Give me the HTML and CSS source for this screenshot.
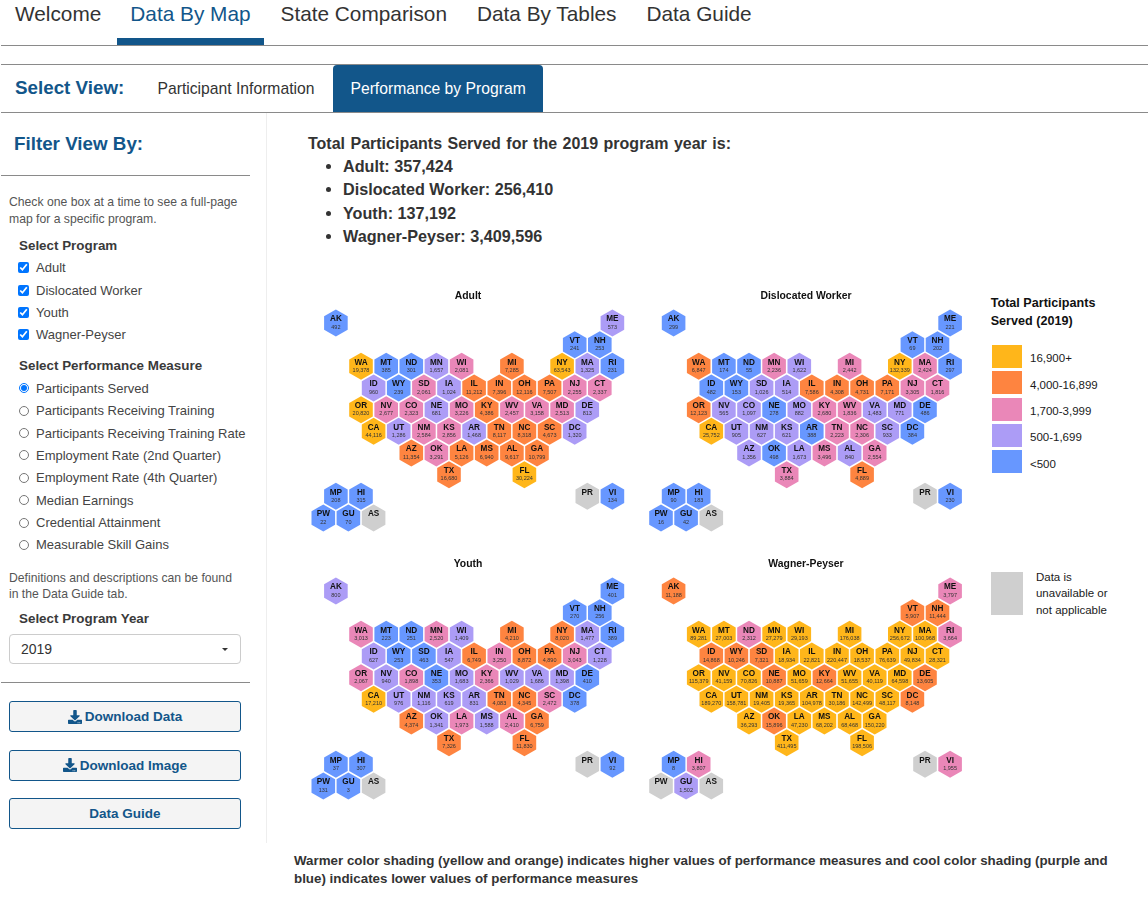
FILE: index.html
```html
<!DOCTYPE html>
<html lang="en">
<head>
<meta charset="utf-8">
<title>Data By Map</title>
<link rel="stylesheet" href="styles.css">
</head>
<body>
<nav class="topnav">
<a class="toptab">Welcome</a>
<a class="toptab active">Data By Map</a>
<a class="toptab">State Comparison</a>
<a class="toptab">Data By Tables</a>
<a class="toptab">Data Guide</a>
</nav>
<div class="subnav">
<span class="viewlabel">Select View:</span>
<a class="subtab">Participant Information</a>
<a class="subtab active">Performance by Program</a>
</div>
<div class="layout">
<aside class="sidebar">
<h2 class="filter-title">Filter View By:</h2>
<div class="rule"></div>
<p class="help first">Check one box at a time to see a full-page map for a specific program.</p>
<div class="group-label top">Select Program</div>
<label class="opt"><input type="checkbox" checked>Adult</label>
<label class="opt"><input type="checkbox" checked>Dislocated Worker</label>
<label class="opt"><input type="checkbox" checked>Youth</label>
<label class="opt"><input type="checkbox" checked>Wagner-Peyser</label>
<div class="group-label">Select Performance Measure</div>
<label class="opt"><input type="radio" name="m" checked>Participants Served</label>
<label class="opt"><input type="radio" name="m">Participants Receiving Training</label>
<label class="opt"><input type="radio" name="m">Participants Receiving Training Rate</label>
<label class="opt"><input type="radio" name="m">Employment Rate (2nd Quarter)</label>
<label class="opt"><input type="radio" name="m">Employment Rate (4th Quarter)</label>
<label class="opt"><input type="radio" name="m">Median Earnings</label>
<label class="opt"><input type="radio" name="m">Credential Attainment</label>
<label class="opt"><input type="radio" name="m">Measurable Skill Gains</label>
<p class="help defs">Definitions and descriptions can be found in the Data Guide tab.</p>
<div class="group-label year">Select Program Year</div>
<div class="selectbox"><span>2019</span><i class="caret"></i></div>
<div class="rule low"></div>
<a class="btn"><svg class="dl" viewBox="0 0 512 512"><path d="M216 0h80c13.3 0 24 10.7 24 24v168h87.7c17.8 0 26.7 21.5 14.1 34.1L269.7 378.3c-7.5 7.5-19.8 7.5-27.3 0L90.1 226.1c-12.6-12.6-3.7-34.1 14.1-34.1H192V24c0-13.3 10.7-24 24-24zm296 376v112c0 13.3-10.7 24-24 24H24c-13.3 0-24-10.7-24-24V376c0-13.3 10.7-24 24-24h146.7l49 49c20.1 20.1 52.5 20.1 72.6 0l49-49H488c13.3 0 24 10.7 24 24zm-124 88c0-11-9-20-20-20s-20 9-20 20 9 20 20 20 20-9 20-20zm64 0c0-11-9-20-20-20s-20 9-20 20 9 20 20 20 20-9 20-20z"/></svg>Download Data</a>
<a class="btn"><svg class="dl" viewBox="0 0 512 512"><path d="M216 0h80c13.3 0 24 10.7 24 24v168h87.7c17.8 0 26.7 21.5 14.1 34.1L269.7 378.3c-7.5 7.5-19.8 7.5-27.3 0L90.1 226.1c-12.6-12.6-3.7-34.1 14.1-34.1H192V24c0-13.3 10.7-24 24-24zm296 376v112c0 13.3-10.7 24-24 24H24c-13.3 0-24-10.7-24-24V376c0-13.3 10.7-24 24-24h146.7l49 49c20.1 20.1 52.5 20.1 72.6 0l49-49H488c13.3 0 24 10.7 24 24zm-124 88c0-11-9-20-20-20s-20 9-20 20 9 20 20 20 20-9 20-20zm64 0c0-11-9-20-20-20s-20 9-20 20 9 20 20 20 20-9 20-20z"/></svg>Download Image</a>
<a class="btn">Data Guide</a>
</aside>
<main class="main">
<h3 class="totals-title">Total Participants Served for the 2019 program year is:</h3>
<ul class="totals">
<li>Adult: 357,424</li>
<li>Dislocated Worker: 256,410</li>
<li>Youth: 137,192</li>
<li>Wagner-Peyser: 3,409,596</li>
</ul>
<figure class="figure">
<div class="maps">
<svg class="map" viewBox="0 0 338 268"><defs><path id="h" d="M0-13.5 11.8-6.8V6.8L0 13.5-11.8 6.8V-6.8Z"/></defs>
<text class="title" x="168" y="15">Adult</text>
<g transform="translate(23.3 39)">
<g class="b" transform="translate(12.6)"><use href="#h"/><text>AK</text><text>492</text></g>
<g class="u" transform="translate(289.1)"><use href="#h"/><text>ME</text><text>573</text></g>
</g>
<g transform="translate(23.3 60.7)">
<g class="b" transform="translate(251.4)"><use href="#h"/><text>VT</text><text>241</text></g>
<g class="b" transform="translate(276.5)"><use href="#h"/><text>NH</text><text>253</text></g>
</g>
<g transform="translate(23.3 82.3)">
<g class="y" transform="translate(37.7)"><use href="#h"/><text>WA</text><text>19,378</text></g>
<g class="b" transform="translate(62.9)"><use href="#h"/><text>MT</text><text>385</text></g>
<g class="b" transform="translate(88)"><use href="#h"/><text>ND</text><text>301</text></g>
<g class="u" transform="translate(113.1)"><use href="#h"/><text>MN</text><text>1,657</text></g>
<g class="p" transform="translate(138.3)"><use href="#h"/><text>WI</text><text>2,081</text></g>
<g class="o" transform="translate(188.6)"><use href="#h"/><text>MI</text><text>7,285</text></g>
<g class="y" transform="translate(238.8)"><use href="#h"/><text>NY</text><text>63,543</text></g>
<g class="u" transform="translate(264)"><use href="#h"/><text>MA</text><text>1,325</text></g>
<g class="b" transform="translate(289.1)"><use href="#h"/><text>RI</text><text>231</text></g>
</g>
<g transform="translate(23.3 104)">
<g class="u" transform="translate(50.3)"><use href="#h"/><text>ID</text><text>960</text></g>
<g class="b" transform="translate(75.4)"><use href="#h"/><text>WY</text><text>239</text></g>
<g class="p" transform="translate(100.6)"><use href="#h"/><text>SD</text><text>2,061</text></g>
<g class="u" transform="translate(125.7)"><use href="#h"/><text>IA</text><text>1,024</text></g>
<g class="o" transform="translate(150.8)"><use href="#h"/><text>IL</text><text>11,212</text></g>
<g class="o" transform="translate(176)"><use href="#h"/><text>IN</text><text>7,396</text></g>
<g class="o" transform="translate(201.1)"><use href="#h"/><text>OH</text><text>12,116</text></g>
<g class="o" transform="translate(226.3)"><use href="#h"/><text>PA</text><text>7,507</text></g>
<g class="p" transform="translate(251.4)"><use href="#h"/><text>NJ</text><text>2,255</text></g>
<g class="p" transform="translate(276.5)"><use href="#h"/><text>CT</text><text>2,337</text></g>
</g>
<g transform="translate(23.3 125.7)">
<g class="y" transform="translate(37.7)"><use href="#h"/><text>OR</text><text>20,820</text></g>
<g class="p" transform="translate(62.9)"><use href="#h"/><text>NV</text><text>2,677</text></g>
<g class="p" transform="translate(88)"><use href="#h"/><text>CO</text><text>2,323</text></g>
<g class="u" transform="translate(113.1)"><use href="#h"/><text>NE</text><text>681</text></g>
<g class="p" transform="translate(138.3)"><use href="#h"/><text>MO</text><text>3,226</text></g>
<g class="o" transform="translate(163.4)"><use href="#h"/><text>KY</text><text>4,386</text></g>
<g class="p" transform="translate(188.6)"><use href="#h"/><text>WV</text><text>2,457</text></g>
<g class="p" transform="translate(213.7)"><use href="#h"/><text>VA</text><text>3,158</text></g>
<g class="p" transform="translate(238.8)"><use href="#h"/><text>MD</text><text>2,513</text></g>
<g class="u" transform="translate(264)"><use href="#h"/><text>DE</text><text>813</text></g>
</g>
<g transform="translate(23.3 147.3)">
<g class="y" transform="translate(50.3)"><use href="#h"/><text>CA</text><text>44,116</text></g>
<g class="u" transform="translate(75.4)"><use href="#h"/><text>UT</text><text>1,286</text></g>
<g class="p" transform="translate(100.6)"><use href="#h"/><text>NM</text><text>2,584</text></g>
<g class="p" transform="translate(125.7)"><use href="#h"/><text>KS</text><text>2,856</text></g>
<g class="u" transform="translate(150.8)"><use href="#h"/><text>AR</text><text>1,468</text></g>
<g class="o" transform="translate(176)"><use href="#h"/><text>TN</text><text>8,117</text></g>
<g class="o" transform="translate(201.1)"><use href="#h"/><text>NC</text><text>8,318</text></g>
<g class="o" transform="translate(226.3)"><use href="#h"/><text>SC</text><text>4,673</text></g>
<g class="u" transform="translate(251.4)"><use href="#h"/><text>DC</text><text>1,320</text></g>
</g>
<g transform="translate(23.3 169)">
<g class="o" transform="translate(88)"><use href="#h"/><text>AZ</text><text>11,354</text></g>
<g class="p" transform="translate(113.1)"><use href="#h"/><text>OK</text><text>3,291</text></g>
<g class="o" transform="translate(138.3)"><use href="#h"/><text>LA</text><text>5,126</text></g>
<g class="o" transform="translate(163.4)"><use href="#h"/><text>MS</text><text>6,940</text></g>
<g class="o" transform="translate(188.6)"><use href="#h"/><text>AL</text><text>9,617</text></g>
<g class="o" transform="translate(213.7)"><use href="#h"/><text>GA</text><text>10,799</text></g>
</g>
<g transform="translate(23.3 190.7)">
<g class="o" transform="translate(125.7)"><use href="#h"/><text>TX</text><text>16,680</text></g>
<g class="y" transform="translate(201.1)"><use href="#h"/><text>FL</text><text>30,224</text></g>
</g>
<g transform="translate(23.3 212.3)">
<g class="b" transform="translate(12.6)"><use href="#h"/><text>MP</text><text>208</text></g>
<g class="b" transform="translate(37.7)"><use href="#h"/><text>HI</text><text>315</text></g>
<g class="n" transform="translate(264)"><use href="#h"/><text>PR</text></g>
<g class="b" transform="translate(289.1)"><use href="#h"/><text>VI</text><text>134</text></g>
</g>
<g transform="translate(23.3 234)">
<g class="b"><use href="#h"/><text>PW</text><text>22</text></g>
<g class="b" transform="translate(25.1)"><use href="#h"/><text>GU</text><text>70</text></g>
<g class="n" transform="translate(50.3)"><use href="#h"/><text>AS</text></g>
</g>
</svg>
<svg class="map" viewBox="0 0 338 268">
<text class="title" x="168" y="15">Dislocated Worker</text>
<g transform="translate(23 39)">
<g class="b" transform="translate(12.6)"><use href="#h"/><text>AK</text><text>299</text></g>
<g class="b" transform="translate(289.1)"><use href="#h"/><text>ME</text><text>221</text></g>
</g>
<g transform="translate(23 60.7)">
<g class="b" transform="translate(251.4)"><use href="#h"/><text>VT</text><text>69</text></g>
<g class="b" transform="translate(276.5)"><use href="#h"/><text>NH</text><text>202</text></g>
</g>
<g transform="translate(23 82.3)">
<g class="o" transform="translate(37.7)"><use href="#h"/><text>WA</text><text>6,847</text></g>
<g class="b" transform="translate(62.9)"><use href="#h"/><text>MT</text><text>174</text></g>
<g class="b" transform="translate(88)"><use href="#h"/><text>ND</text><text>55</text></g>
<g class="p" transform="translate(113.1)"><use href="#h"/><text>MN</text><text>2,236</text></g>
<g class="u" transform="translate(138.3)"><use href="#h"/><text>WI</text><text>1,622</text></g>
<g class="p" transform="translate(188.6)"><use href="#h"/><text>MI</text><text>2,442</text></g>
<g class="y" transform="translate(238.8)"><use href="#h"/><text>NY</text><text>132,339</text></g>
<g class="p" transform="translate(264)"><use href="#h"/><text>MA</text><text>2,424</text></g>
<g class="b" transform="translate(289.1)"><use href="#h"/><text>RI</text><text>297</text></g>
</g>
<g transform="translate(23 104)">
<g class="b" transform="translate(50.3)"><use href="#h"/><text>ID</text><text>482</text></g>
<g class="b" transform="translate(75.4)"><use href="#h"/><text>WY</text><text>153</text></g>
<g class="u" transform="translate(100.6)"><use href="#h"/><text>SD</text><text>1,026</text></g>
<g class="u" transform="translate(125.7)"><use href="#h"/><text>IA</text><text>514</text></g>
<g class="o" transform="translate(150.8)"><use href="#h"/><text>IL</text><text>7,586</text></g>
<g class="o" transform="translate(176)"><use href="#h"/><text>IN</text><text>4,308</text></g>
<g class="o" transform="translate(201.1)"><use href="#h"/><text>OH</text><text>4,731</text></g>
<g class="o" transform="translate(226.3)"><use href="#h"/><text>PA</text><text>7,171</text></g>
<g class="p" transform="translate(251.4)"><use href="#h"/><text>NJ</text><text>3,305</text></g>
<g class="p" transform="translate(276.5)"><use href="#h"/><text>CT</text><text>1,816</text></g>
</g>
<g transform="translate(23 125.7)">
<g class="o" transform="translate(37.7)"><use href="#h"/><text>OR</text><text>12,123</text></g>
<g class="u" transform="translate(62.9)"><use href="#h"/><text>NV</text><text>565</text></g>
<g class="u" transform="translate(88)"><use href="#h"/><text>CO</text><text>1,097</text></g>
<g class="b" transform="translate(113.1)"><use href="#h"/><text>NE</text><text>278</text></g>
<g class="u" transform="translate(138.3)"><use href="#h"/><text>MO</text><text>882</text></g>
<g class="p" transform="translate(163.4)"><use href="#h"/><text>KY</text><text>2,680</text></g>
<g class="p" transform="translate(188.6)"><use href="#h"/><text>WV</text><text>1,836</text></g>
<g class="u" transform="translate(213.7)"><use href="#h"/><text>VA</text><text>1,483</text></g>
<g class="u" transform="translate(238.8)"><use href="#h"/><text>MD</text><text>771</text></g>
<g class="b" transform="translate(264)"><use href="#h"/><text>DE</text><text>486</text></g>
</g>
<g transform="translate(23 147.3)">
<g class="y" transform="translate(50.3)"><use href="#h"/><text>CA</text><text>25,752</text></g>
<g class="u" transform="translate(75.4)"><use href="#h"/><text>UT</text><text>905</text></g>
<g class="u" transform="translate(100.6)"><use href="#h"/><text>NM</text><text>627</text></g>
<g class="u" transform="translate(125.7)"><use href="#h"/><text>KS</text><text>621</text></g>
<g class="b" transform="translate(150.8)"><use href="#h"/><text>AR</text><text>388</text></g>
<g class="p" transform="translate(176)"><use href="#h"/><text>TN</text><text>2,223</text></g>
<g class="p" transform="translate(201.1)"><use href="#h"/><text>NC</text><text>2,306</text></g>
<g class="u" transform="translate(226.3)"><use href="#h"/><text>SC</text><text>933</text></g>
<g class="b" transform="translate(251.4)"><use href="#h"/><text>DC</text><text>384</text></g>
</g>
<g transform="translate(23 169)">
<g class="u" transform="translate(88)"><use href="#h"/><text>AZ</text><text>1,356</text></g>
<g class="b" transform="translate(113.1)"><use href="#h"/><text>OK</text><text>498</text></g>
<g class="u" transform="translate(138.3)"><use href="#h"/><text>LA</text><text>1,673</text></g>
<g class="p" transform="translate(163.4)"><use href="#h"/><text>MS</text><text>3,496</text></g>
<g class="u" transform="translate(188.6)"><use href="#h"/><text>AL</text><text>840</text></g>
<g class="p" transform="translate(213.7)"><use href="#h"/><text>GA</text><text>2,554</text></g>
</g>
<g transform="translate(23 190.7)">
<g class="p" transform="translate(125.7)"><use href="#h"/><text>TX</text><text>3,884</text></g>
<g class="o" transform="translate(201.1)"><use href="#h"/><text>FL</text><text>4,889</text></g>
</g>
<g transform="translate(23 212.3)">
<g class="b" transform="translate(12.6)"><use href="#h"/><text>MP</text><text>90</text></g>
<g class="b" transform="translate(37.7)"><use href="#h"/><text>HI</text><text>183</text></g>
<g class="n" transform="translate(264)"><use href="#h"/><text>PR</text></g>
<g class="b" transform="translate(289.1)"><use href="#h"/><text>VI</text><text>230</text></g>
</g>
<g transform="translate(23 234)">
<g class="b"><use href="#h"/><text>PW</text><text>16</text></g>
<g class="b" transform="translate(25.1)"><use href="#h"/><text>GU</text><text>42</text></g>
<g class="n" transform="translate(50.3)"><use href="#h"/><text>AS</text></g>
</g>
</svg>
<svg class="map" viewBox="0 0 338 268">
<text class="title" x="168" y="15">Youth</text>
<g transform="translate(23.3 39)">
<g class="u" transform="translate(12.6)"><use href="#h"/><text>AK</text><text>800</text></g>
<g class="b" transform="translate(289.1)"><use href="#h"/><text>ME</text><text>401</text></g>
</g>
<g transform="translate(23.3 60.7)">
<g class="b" transform="translate(251.4)"><use href="#h"/><text>VT</text><text>270</text></g>
<g class="b" transform="translate(276.5)"><use href="#h"/><text>NH</text><text>256</text></g>
</g>
<g transform="translate(23.3 82.3)">
<g class="p" transform="translate(37.7)"><use href="#h"/><text>WA</text><text>3,013</text></g>
<g class="b" transform="translate(62.9)"><use href="#h"/><text>MT</text><text>223</text></g>
<g class="b" transform="translate(88)"><use href="#h"/><text>ND</text><text>251</text></g>
<g class="p" transform="translate(113.1)"><use href="#h"/><text>MN</text><text>2,520</text></g>
<g class="u" transform="translate(138.3)"><use href="#h"/><text>WI</text><text>1,409</text></g>
<g class="o" transform="translate(188.6)"><use href="#h"/><text>MI</text><text>4,210</text></g>
<g class="o" transform="translate(238.8)"><use href="#h"/><text>NY</text><text>8,020</text></g>
<g class="u" transform="translate(264)"><use href="#h"/><text>MA</text><text>1,477</text></g>
<g class="b" transform="translate(289.1)"><use href="#h"/><text>RI</text><text>389</text></g>
</g>
<g transform="translate(23.3 104)">
<g class="u" transform="translate(50.3)"><use href="#h"/><text>ID</text><text>627</text></g>
<g class="b" transform="translate(75.4)"><use href="#h"/><text>WY</text><text>253</text></g>
<g class="b" transform="translate(100.6)"><use href="#h"/><text>SD</text><text>463</text></g>
<g class="u" transform="translate(125.7)"><use href="#h"/><text>IA</text><text>547</text></g>
<g class="o" transform="translate(150.8)"><use href="#h"/><text>IL</text><text>6,749</text></g>
<g class="p" transform="translate(176)"><use href="#h"/><text>IN</text><text>3,250</text></g>
<g class="o" transform="translate(201.1)"><use href="#h"/><text>OH</text><text>8,872</text></g>
<g class="o" transform="translate(226.3)"><use href="#h"/><text>PA</text><text>4,890</text></g>
<g class="p" transform="translate(251.4)"><use href="#h"/><text>NJ</text><text>3,043</text></g>
<g class="u" transform="translate(276.5)"><use href="#h"/><text>CT</text><text>1,228</text></g>
</g>
<g transform="translate(23.3 125.7)">
<g class="p" transform="translate(37.7)"><use href="#h"/><text>OR</text><text>2,067</text></g>
<g class="u" transform="translate(62.9)"><use href="#h"/><text>NV</text><text>940</text></g>
<g class="p" transform="translate(88)"><use href="#h"/><text>CO</text><text>1,898</text></g>
<g class="b" transform="translate(113.1)"><use href="#h"/><text>NE</text><text>353</text></g>
<g class="u" transform="translate(138.3)"><use href="#h"/><text>MO</text><text>1,683</text></g>
<g class="p" transform="translate(163.4)"><use href="#h"/><text>KY</text><text>2,366</text></g>
<g class="u" transform="translate(188.6)"><use href="#h"/><text>WV</text><text>1,029</text></g>
<g class="u" transform="translate(213.7)"><use href="#h"/><text>VA</text><text>1,686</text></g>
<g class="u" transform="translate(238.8)"><use href="#h"/><text>MD</text><text>1,398</text></g>
<g class="b" transform="translate(264)"><use href="#h"/><text>DE</text><text>410</text></g>
</g>
<g transform="translate(23.3 147.3)">
<g class="y" transform="translate(50.3)"><use href="#h"/><text>CA</text><text>17,210</text></g>
<g class="u" transform="translate(75.4)"><use href="#h"/><text>UT</text><text>976</text></g>
<g class="u" transform="translate(100.6)"><use href="#h"/><text>NM</text><text>1,116</text></g>
<g class="u" transform="translate(125.7)"><use href="#h"/><text>KS</text><text>619</text></g>
<g class="u" transform="translate(150.8)"><use href="#h"/><text>AR</text><text>831</text></g>
<g class="o" transform="translate(176)"><use href="#h"/><text>TN</text><text>4,083</text></g>
<g class="o" transform="translate(201.1)"><use href="#h"/><text>NC</text><text>4,345</text></g>
<g class="p" transform="translate(226.3)"><use href="#h"/><text>SC</text><text>2,472</text></g>
<g class="b" transform="translate(251.4)"><use href="#h"/><text>DC</text><text>378</text></g>
</g>
<g transform="translate(23.3 169)">
<g class="o" transform="translate(88)"><use href="#h"/><text>AZ</text><text>4,374</text></g>
<g class="u" transform="translate(113.1)"><use href="#h"/><text>OK</text><text>1,341</text></g>
<g class="p" transform="translate(138.3)"><use href="#h"/><text>LA</text><text>1,973</text></g>
<g class="u" transform="translate(163.4)"><use href="#h"/><text>MS</text><text>1,588</text></g>
<g class="p" transform="translate(188.6)"><use href="#h"/><text>AL</text><text>2,410</text></g>
<g class="o" transform="translate(213.7)"><use href="#h"/><text>GA</text><text>6,759</text></g>
</g>
<g transform="translate(23.3 190.7)">
<g class="o" transform="translate(125.7)"><use href="#h"/><text>TX</text><text>7,326</text></g>
<g class="o" transform="translate(201.1)"><use href="#h"/><text>FL</text><text>11,830</text></g>
</g>
<g transform="translate(23.3 212.3)">
<g class="b" transform="translate(12.6)"><use href="#h"/><text>MP</text><text>37</text></g>
<g class="b" transform="translate(37.7)"><use href="#h"/><text>HI</text><text>307</text></g>
<g class="n" transform="translate(264)"><use href="#h"/><text>PR</text></g>
<g class="b" transform="translate(289.1)"><use href="#h"/><text>VI</text><text>92</text></g>
</g>
<g transform="translate(23.3 234)">
<g class="b"><use href="#h"/><text>PW</text><text>131</text></g>
<g class="b" transform="translate(25.1)"><use href="#h"/><text>GU</text><text>3</text></g>
<g class="n" transform="translate(50.3)"><use href="#h"/><text>AS</text></g>
</g>
</svg>
<svg class="map" viewBox="0 0 338 268">
<text class="title" x="168" y="15">Wagner-Peyser</text>
<g transform="translate(23 39)">
<g class="o" transform="translate(12.6)"><use href="#h"/><text>AK</text><text>11,188</text></g>
<g class="p" transform="translate(289.1)"><use href="#h"/><text>ME</text><text>3,797</text></g>
</g>
<g transform="translate(23 60.7)">
<g class="o" transform="translate(251.4)"><use href="#h"/><text>VT</text><text>5,907</text></g>
<g class="o" transform="translate(276.5)"><use href="#h"/><text>NH</text><text>11,444</text></g>
</g>
<g transform="translate(23 82.3)">
<g class="y" transform="translate(37.7)"><use href="#h"/><text>WA</text><text>89,281</text></g>
<g class="y" transform="translate(62.9)"><use href="#h"/><text>MT</text><text>27,003</text></g>
<g class="p" transform="translate(88)"><use href="#h"/><text>ND</text><text>2,312</text></g>
<g class="y" transform="translate(113.1)"><use href="#h"/><text>MN</text><text>27,279</text></g>
<g class="y" transform="translate(138.3)"><use href="#h"/><text>WI</text><text>29,193</text></g>
<g class="y" transform="translate(188.6)"><use href="#h"/><text>MI</text><text>176,038</text></g>
<g class="y" transform="translate(238.8)"><use href="#h"/><text>NY</text><text>256,672</text></g>
<g class="y" transform="translate(264)"><use href="#h"/><text>MA</text><text>100,968</text></g>
<g class="p" transform="translate(289.1)"><use href="#h"/><text>RI</text><text>3,664</text></g>
</g>
<g transform="translate(23 104)">
<g class="o" transform="translate(50.3)"><use href="#h"/><text>ID</text><text>14,868</text></g>
<g class="o" transform="translate(75.4)"><use href="#h"/><text>WY</text><text>10,246</text></g>
<g class="o" transform="translate(100.6)"><use href="#h"/><text>SD</text><text>7,321</text></g>
<g class="y" transform="translate(125.7)"><use href="#h"/><text>IA</text><text>18,934</text></g>
<g class="y" transform="translate(150.8)"><use href="#h"/><text>IL</text><text>22,821</text></g>
<g class="y" transform="translate(176)"><use href="#h"/><text>IN</text><text>220,447</text></g>
<g class="y" transform="translate(201.1)"><use href="#h"/><text>OH</text><text>18,537</text></g>
<g class="y" transform="translate(226.3)"><use href="#h"/><text>PA</text><text>76,639</text></g>
<g class="y" transform="translate(251.4)"><use href="#h"/><text>NJ</text><text>49,834</text></g>
<g class="y" transform="translate(276.5)"><use href="#h"/><text>CT</text><text>28,321</text></g>
</g>
<g transform="translate(23 125.7)">
<g class="y" transform="translate(37.7)"><use href="#h"/><text>OR</text><text>115,379</text></g>
<g class="y" transform="translate(62.9)"><use href="#h"/><text>NV</text><text>41,159</text></g>
<g class="y" transform="translate(88)"><use href="#h"/><text>CO</text><text>70,826</text></g>
<g class="o" transform="translate(113.1)"><use href="#h"/><text>NE</text><text>10,887</text></g>
<g class="y" transform="translate(138.3)"><use href="#h"/><text>MO</text><text>51,659</text></g>
<g class="o" transform="translate(163.4)"><use href="#h"/><text>KY</text><text>12,664</text></g>
<g class="y" transform="translate(188.6)"><use href="#h"/><text>WV</text><text>51,655</text></g>
<g class="y" transform="translate(213.7)"><use href="#h"/><text>VA</text><text>40,119</text></g>
<g class="y" transform="translate(238.8)"><use href="#h"/><text>MD</text><text>64,598</text></g>
<g class="o" transform="translate(264)"><use href="#h"/><text>DE</text><text>13,605</text></g>
</g>
<g transform="translate(23 147.3)">
<g class="y" transform="translate(50.3)"><use href="#h"/><text>CA</text><text>189,270</text></g>
<g class="y" transform="translate(75.4)"><use href="#h"/><text>UT</text><text>158,781</text></g>
<g class="y" transform="translate(100.6)"><use href="#h"/><text>NM</text><text>19,405</text></g>
<g class="y" transform="translate(125.7)"><use href="#h"/><text>KS</text><text>19,365</text></g>
<g class="y" transform="translate(150.8)"><use href="#h"/><text>AR</text><text>104,978</text></g>
<g class="y" transform="translate(176)"><use href="#h"/><text>TN</text><text>30,186</text></g>
<g class="y" transform="translate(201.1)"><use href="#h"/><text>NC</text><text>142,499</text></g>
<g class="y" transform="translate(226.3)"><use href="#h"/><text>SC</text><text>48,117</text></g>
<g class="o" transform="translate(251.4)"><use href="#h"/><text>DC</text><text>8,148</text></g>
</g>
<g transform="translate(23 169)">
<g class="y" transform="translate(88)"><use href="#h"/><text>AZ</text><text>36,293</text></g>
<g class="o" transform="translate(113.1)"><use href="#h"/><text>OK</text><text>15,896</text></g>
<g class="y" transform="translate(138.3)"><use href="#h"/><text>LA</text><text>47,230</text></g>
<g class="y" transform="translate(163.4)"><use href="#h"/><text>MS</text><text>68,202</text></g>
<g class="y" transform="translate(188.6)"><use href="#h"/><text>AL</text><text>68,468</text></g>
<g class="y" transform="translate(213.7)"><use href="#h"/><text>GA</text><text>150,220</text></g>
</g>
<g transform="translate(23 190.7)">
<g class="y" transform="translate(125.7)"><use href="#h"/><text>TX</text><text>411,495</text></g>
<g class="y" transform="translate(201.1)"><use href="#h"/><text>FL</text><text>198,506</text></g>
</g>
<g transform="translate(23 212.3)">
<g class="b" transform="translate(12.6)"><use href="#h"/><text>MP</text><text>8</text></g>
<g class="p" transform="translate(37.7)"><use href="#h"/><text>HI</text><text>3,807</text></g>
<g class="n" transform="translate(264)"><use href="#h"/><text>PR</text></g>
<g class="p" transform="translate(289.1)"><use href="#h"/><text>VI</text><text>1,955</text></g>
</g>
<g transform="translate(23 234)">
<g class="n"><use href="#h"/><text>PW</text></g>
<g class="u" transform="translate(25.1)"><use href="#h"/><text>GU</text><text>1,502</text></g>
<g class="n" transform="translate(50.3)"><use href="#h"/><text>AS</text></g>
</g>
</svg>
</div>
<div class="legend">
<div class="legend-title">Total Participants Served (2019)</div>
<ul class="scale">
<li><span class="swatch s-y"></span>16,900+</li>
<li><span class="swatch s-o"></span>4,000-16,899</li>
<li><span class="swatch s-p"></span>1,700-3,999</li>
<li><span class="swatch s-u"></span>500-1,699</li>
<li><span class="swatch s-b"></span>&lt;500</li>
</ul>
<div class="nodata"><span class="nodata-swatch"></span><span class="nodata-text">Data is unavailable or not applicable</span></div>
</div>
</figure>
<p class="note">Warmer color shading (yellow and orange) indicates higher values of performance measures and cool color shading (purple and blue) indicates lower values of performance measures</p>
</main>
</div>
</body>
</html>
```
FILE: styles.css
```css
* { box-sizing: border-box; }
html, body { margin: 0; padding: 0; background: #fff; }
body { font-family: "Liberation Sans", Arial, sans-serif; color: #333; }

.topnav { display: flex; gap: 3px; height: 46px; margin-left: 1px; border-bottom: 1px solid #8a8a8a; }
.toptab { height: 45px; padding: 0 13.5px; font-size: 20.8px; line-height: 28px; color: #333; border-bottom: 7px solid transparent; }
.toptab:first-child { padding: 0 12.5px 0 14px; }
.toptab.active { color: #12568a; border-bottom-color: #12568a; }

.subnav { display: flex; align-items: stretch; height: 49px; margin: 18px 0 0 1px; border-top: 1px solid #8a8a8a; border-bottom: 1px solid #8a8a8a; padding-left: 14px; }
.viewlabel { font-size: 18.8px; font-weight: bold; color: #12568a; line-height: 45px; width: 125px; }
.subtab { padding: 0 17.5px; font-size: 15.7px; line-height: 47px; color: #333; margin-right: 1px; border-radius: 4px 4px 0 0; }
.subtab.active { background: #12568a; color: #fff; }

.layout { display: flex; align-items: flex-start; }
.sidebar { width: 267px; padding: 19px 0 14px; border-right: 1px solid #eee; flex: none; }
.filter-title { margin: 0 0 0 14px; font-size: 18.8px; line-height: 23px; color: #12568a; font-weight: bold; }
.rule { margin: 20px 0 0 1px; width: 249px; border-top: 1px solid #8a8a8a; }
.rule.low { margin-top: 18px; margin-bottom: 18px; }
.help { margin: 0 0 0 9px; width: 232px; font-size: 12.2px; line-height: 17px; color: #555; }
.help.first { margin-top: 17.5px; }
.help.defs { margin-top: 13.5px; line-height: 16.5px; }
.group-label { margin: 10px 0 1px 19px; font-size: 13.4px; font-weight: bold; line-height: 20px; color: #3a3a3a; }
.group-label.top { margin-top: 8px; }
.group-label.year { margin-top: 6.5px; margin-bottom: 0; }
.opt { display: flex; align-items: center; height: 22.4px; padding-left: 18px; font-size: 13px; color: #444; white-space: nowrap; }
.opt input { width: 11px; height: 11px; margin: 0 7px 0 0; flex: none; accent-color: #0075ff; }
.opt input[type="radio"] { width: 10px; height: 10px; margin-left: 1px; }

.selectbox { display: flex; align-items: center; justify-content: space-between; margin: 5px 0 0 9px; width: 232px; height: 30px; padding: 0 12px 0 11px; border: 1px solid #ccc; border-radius: 4px; font-size: 14px; color: #333; background: #fff; }
.caret { width: 0; height: 0; border-left: 3px solid transparent; border-right: 3px solid transparent; border-top: 3px solid #333; }

.btn { display: flex; align-items: center; justify-content: center; margin: 0 0 17.5px 9px; width: 232px; height: 31px; border: 1px solid #12568a; border-radius: 3px; background: #f4f4f4; color: #12568a; font-size: 13.5px; font-weight: bold; }
.btn:last-child { margin-bottom: 0; }
.dl { width: 14px; height: 14px; fill: #12568a; margin-right: 3px; }

.main { flex: 1; min-width: 0; padding-top: 19px; }
.totals-title { margin: 0 0 0 41px; font-size: 16px; line-height: 23px; font-weight: bold; color: #333; word-spacing: 1px; }
.totals { margin: 0 0 0 76px; padding: 0; font-size: 16.2px; font-weight: bold; line-height: 23.3px; color: #333; list-style: disc; }
.figure { display: flex; margin: 36px 0 0 33px; }
.maps { display: grid; grid-template-columns: repeat(2, 338px); grid-auto-rows: 268px; flex: none; }
.map { display: block; width: 338px; height: 268px; filter: blur(0.25px); }
.map text { font: bold 8.2px "Liberation Sans", Arial, sans-serif; fill: #111; text-anchor: middle; transform: translateY(-1.8px); }
.map text + text { font: 5.5px "Liberation Sans", Arial, sans-serif; fill: #333; transform: translateY(5.7px); }
.map .title { font: bold 10.4px "Liberation Sans", Arial, sans-serif; fill: #111; transform: none; }
.y use { fill: #ffb61a; }
.o use { fill: #fe8440; }
.p use { fill: #ea87b8; }
.u use { fill: #ac9cf6; }
.b use { fill: #6797ff; }
.n use { fill: #cfcfcf; }

.legend { flex: none; width: 150px; padding: 10px 0 0 14.7px; color: #1a1a1a; }
.legend-title { width: 120px; font-size: 12.6px; font-weight: bold; line-height: 18px; color: #111; }
.scale { margin: 15px 0 0 1.3px; padding: 0; list-style: none; font-size: 11.5px; }
.scale li { display: flex; align-items: center; height: 26.3px; }
.swatch { width: 30px; height: 23px; margin: 0 8px 3.3px 0; flex: none; }
.s-y { background: #ffb61a; }
.s-o { background: #fe8440; }
.s-p { background: #ea87b8; }
.s-u { background: #ac9cf6; }
.s-b { background: #6797ff; }
.nodata { display: flex; align-items: flex-start; margin-top: 92px; font-size: 11.5px; line-height: 16.5px; }
.nodata-swatch { width: 32.6px; height: 43px; margin: 3.5px 12.7px 0 0; background: #cfcfcf; flex: none; }
.nodata-text { width: 80px; }

.note { margin: 32px 0 0 27px; width: 828px; font-size: 13.35px; font-weight: bold; line-height: 18px; color: #333; }
```
